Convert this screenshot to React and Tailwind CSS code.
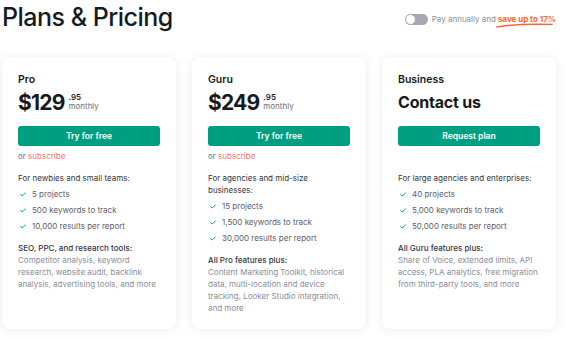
import React from 'react';

const plans = [
  {
    name: 'Pro',
    price: '$129',
    cents: '.95',
    cta: 'Try for free',
    subscribe: true,
    audience: ['For newbies and small teams:'],
    features: ['5 projects', '500 keywords to track', '10,000 results per report'],
    toolsTitle: 'SEO, PPC, and research tools:',
    tools: ['Competitor analysis, keyword', 'research, website audit, backlink', 'analysis, advertising tools, and more'],
  },
  {
    name: 'Guru',
    price: '$249',
    cents: '.95',
    cta: 'Try for free',
    subscribe: true,
    audience: ['For agencies and mid-size', 'businesses:'],
    features: ['15 projects', '1,500 keywords to track', '30,000 results per report'],
    toolsTitle: 'All Pro features plus:',
    tools: ['Content Marketing Toolkit, historical', 'data, multi-location and device', 'tracking, Looker Studio integration,', 'and more'],
  },
  {
    name: 'Business',
    contact: 'Contact us',
    cta: 'Request plan',
    subscribe: false,
    audience: ['For large agencies and enterprises:'],
    features: ['40 projects', '5,000 keywords to track', '50,000 results per report'],
    toolsTitle: 'All Guru features plus:',
    tools: ['Share of Voice, extended limits, API', 'access, PLA analytics, free migration', 'from third-party tools, and more'],
  },
];

function Check() {
  return (
    <svg width="6" height="5" viewBox="0 0 6 5" className="shrink-0">
      <path d="M0.6 2.6 L2.3 4 L5.4 0.8" fill="none" stroke="#009f81" strokeWidth="1" strokeLinecap="round" strokeLinejoin="round" />
    </svg>
  );
}

function PlanCard({ plan }) {
  return (
    <div className="bg-white rounded-[8px] shadow-[0_1px_10px_rgba(30,35,60,0.09)] px-4 pt-[17px] pb-[15px]">
      <div className="text-[10.5px] font-semibold text-[#171a22] leading-[12px]">{plan.name}</div>
      <div className="h-[28px] mt-[2px] flex items-center">
        {plan.contact ? (
          <span className="text-[16px] font-bold text-[#171a22] tracking-[-0.2px]">{plan.contact}</span>
        ) : (
          <div className="flex items-center">
            <span className="text-[21px] font-bold text-[#171a22] tracking-[-0.8px] leading-none">{plan.price}</span>
            <div className="ml-[4px] flex flex-col leading-[9px]">
              <span className="text-[8px] font-semibold text-[#171a22]">{plan.cents}</span>
              <span className="text-[8px] text-[#6c6e79]">monthly</span>
            </div>
          </div>
        )}
      </div>
      <button className="mt-[10px] w-full h-[20px] rounded-[3px] bg-[#009f81] text-white text-[8.5px] font-semibold">
        {plan.cta}
      </button>
      <div className="h-[20px] flex items-center text-[8px] text-[#6c6e79]">
        {plan.subscribe && (
          <span>
            or <span className="text-[#ff6b6b]">subscribe</span>
          </span>
        )}
      </div>
      <div className="mt-[6px] text-[8px] leading-[12px] text-[#333640]">
        {plan.audience.map((l) => (
          <div key={l}>{l}</div>
        ))}
      </div>
      <div className="mt-[2px] flex flex-col">
        {plan.features.map((f) => (
          <div key={f} className="h-[16px] flex items-center gap-[6px] pl-[2px] text-[8px] text-[#5b5e6b]">
            <Check />
            <span>{f}</span>
          </div>
        ))}
      </div>
      <div className="mt-[8px] text-[8px] leading-[12px]">
        <div className="text-[#333640] font-medium">{plan.toolsTitle}</div>
        {plan.tools.map((t) => (
          <div key={t} className="text-[#8a8d99]">{t}</div>
        ))}
      </div>
    </div>
  );
}

export default function App() {
  return (
    <div className="w-[566px] h-[339px] bg-white overflow-hidden font-['Inter',sans-serif]">
      <div className="h-[57px] flex items-start justify-between pl-[2px] pr-[10px]">
        <h1 className="text-[25px] font-medium text-[#171a22] tracking-[-0.5px] leading-[34px] mt-0">Plans &amp; Pricing</h1>
        <div className="flex items-center mt-[13px]">
          <div className="w-[23px] h-[11px] rounded-full bg-[#a6a8b4] p-[1px] flex items-center">
            <div className="w-[9px] h-[9px] rounded-full bg-white" />
          </div>
          <span className="ml-[4px] text-[8px] text-[#8a8d99]">Pay annually and</span>
          <span className="relative ml-[2px] text-[8px] font-bold text-[#ff642d]">
            save up to 17%
            <svg className="absolute left-[-2px] top-[10px]" width="58" height="5" viewBox="0 0 58 5">
              <path d="M1 4 C 15 1.5, 35 1, 56 1.5" fill="none" stroke="#ff642d" strokeWidth="1.5" strokeLinecap="round" />
            </svg>
          </span>
        </div>
      </div>
      <div className="grid grid-cols-3 gap-4 w-[556px] pl-[2px] items-stretch">
        {plans.map((p) => (
          <PlanCard key={p.name} plan={p} />
        ))}
      </div>
    </div>
  );
}
